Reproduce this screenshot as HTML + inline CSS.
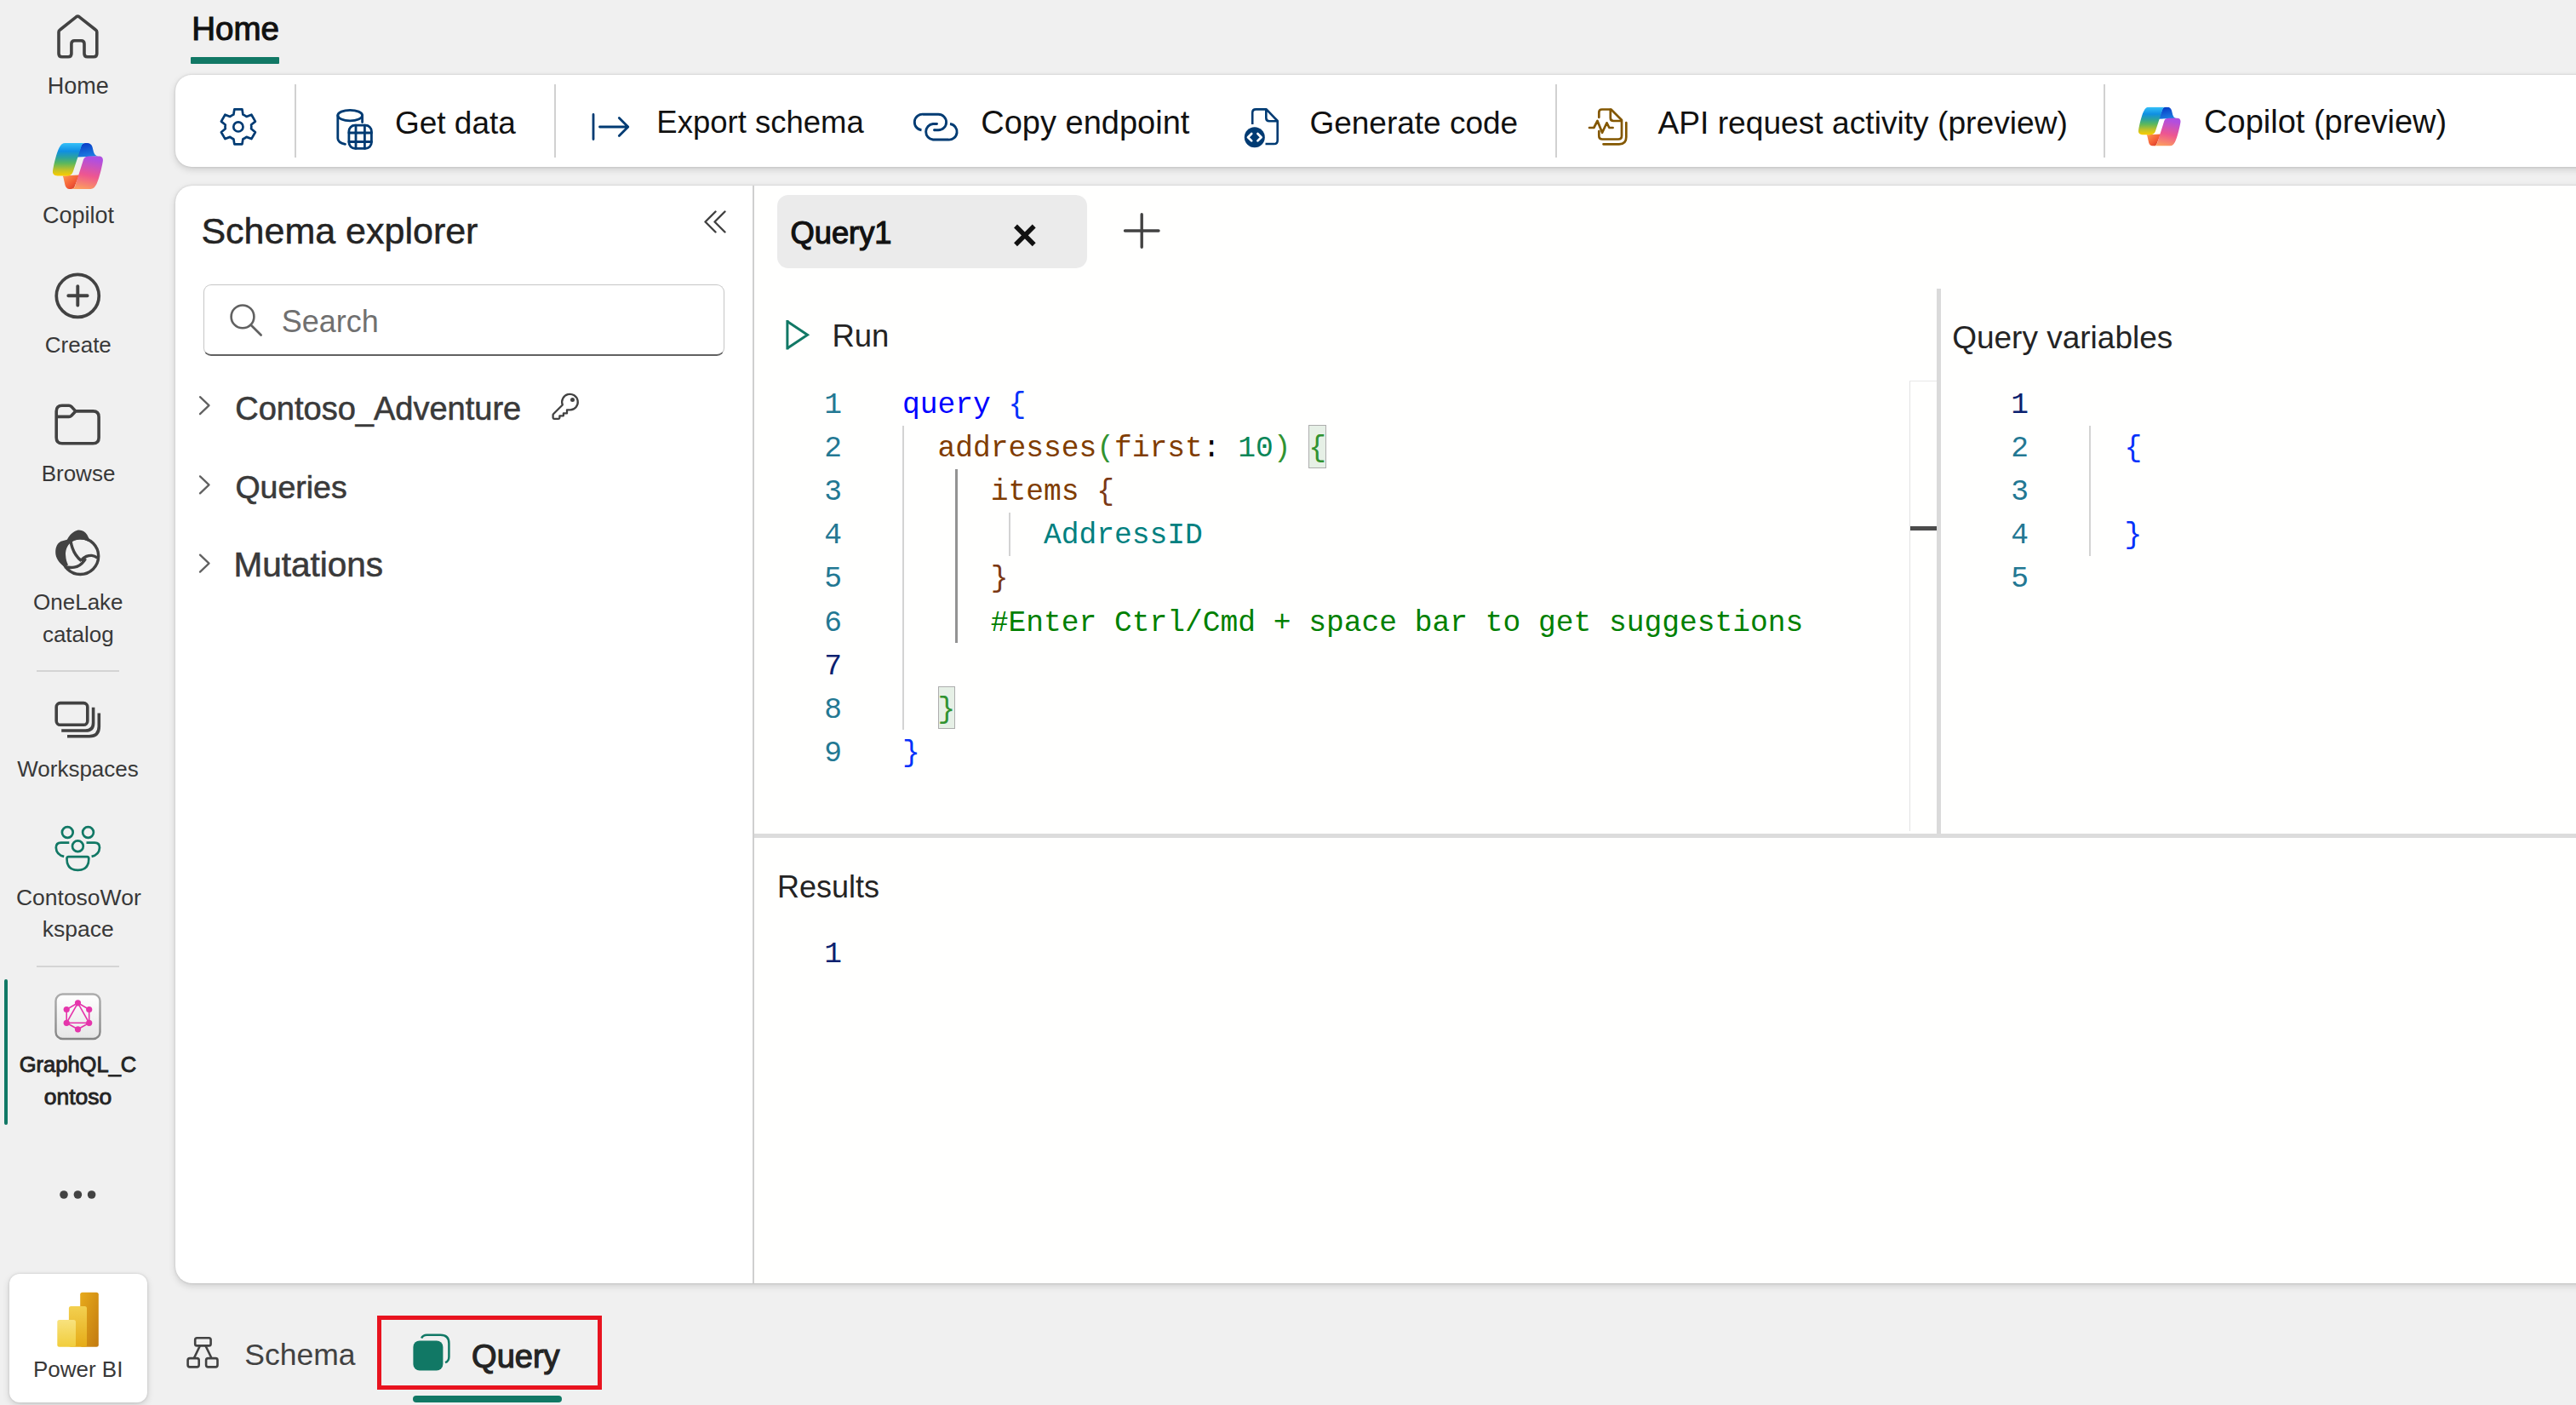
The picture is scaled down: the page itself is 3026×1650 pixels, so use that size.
<!DOCTYPE html>
<html><head><meta charset="utf-8"><style>
html,body{margin:0;padding:0;}
body{width:3026px;height:1650px;position:relative;overflow:hidden;background:#f0f0f0;font-family:'Liberation Sans', sans-serif;}
.r{position:absolute;}
.t{position:absolute;white-space:pre;line-height:1;}
svg.ic{position:absolute;left:0;top:0;}
</style></head><body>

<div class="r" style="left:206px;top:88px;width:3000px;height:108px;background:#fff;border-radius:19px;box-shadow:0 0 3px rgba(0,0,0,0.14),0 3px 8px rgba(0,0,0,0.15);"></div>
<div class="r" style="left:206px;top:218px;width:3000px;height:1289px;background:#fff;border-radius:20px;box-shadow:0 0 3px rgba(0,0,0,0.14),0 3px 8px rgba(0,0,0,0.15);"></div>
<div class="r" style="left:886px;top:218px;width:2140px;height:1289px;background:#fffffe;"></div>
<div class="r" style="left:11px;top:1496px;width:162px;height:151px;background:#fff;border-radius:12px;box-shadow:0 0 3px rgba(0,0,0,0.14),0 3px 8px rgba(0,0,0,0.15);"></div>
<div class="r" style="left:224px;top:67px;width:104px;height:8px;background:#117865;border-radius:1px;"></div>
<div class="r" style="left:345.5px;top:99px;width:2px;height:86px;background:#d1d1d1;"></div>
<div class="r" style="left:651px;top:99px;width:2px;height:86px;background:#d1d1d1;"></div>
<div class="r" style="left:1827px;top:99px;width:2px;height:86px;background:#d1d1d1;"></div>
<div class="r" style="left:2471px;top:99px;width:2px;height:86px;background:#d1d1d1;"></div>
<div class="r" style="left:43px;top:787px;width:97px;height:2px;background:#d4d4d4;"></div>
<div class="r" style="left:43px;top:1134px;width:97px;height:2px;background:#d4d4d4;"></div>
<div class="r" style="left:5px;top:1150px;width:4px;height:171px;background:#117865;border-radius:2px;"></div>
<div class="r" style="left:884px;top:218px;width:2px;height:1289px;background:#cfcfcf;"></div>
<div class="r" style="left:239px;top:334px;width:612px;height:84px;border:1.5px solid #c6c6c6;border-bottom:2.5px solid #616161;border-radius:9px;box-sizing:border-box;background:#fff;"></div>
<div class="r" style="left:913px;top:229px;width:364px;height:86px;background:#ebebeb;border-radius:13px;"></div>
<div class="r" style="left:886px;top:979px;width:2140px;height:5px;background:#dcdcdc;"></div>
<div class="r" style="left:2275px;top:339px;width:5px;height:640px;background:#dadada;"></div>
<div class="r" style="left:2243px;top:447px;width:32px;height:529px;border-left:1px solid #e3e3e3;border-top:1px solid #e8e8e8;box-sizing:border-box;"></div>
<div class="r" style="left:2244px;top:618px;width:31px;height:5px;background:#4b4b4b;"></div>
<div class="r" style="left:1537.25px;top:499.1px;width:20.75px;height:50.6px;background:#e6f0e6;border:1.5px solid #adadad;box-sizing:border-box;"></div>
<div class="r" style="left:1101.5px;top:805.7px;width:20.75px;height:50.6px;background:#e6f0e6;border:1.5px solid #adadad;box-sizing:border-box;"></div>
<div class="r" style="left:1060px;top:499.6px;width:2px;height:357.69999999999993px;background:#d3d3d3;"></div>
<div class="r" style="left:1122.25px;top:550.7px;width:3px;height:204.39999999999998px;background:#939393;"></div>
<div class="r" style="left:1184.5px;top:601.8px;width:2px;height:51.1px;background:#d3d3d3;"></div>
<div class="r" style="left:2454px;top:499.6px;width:2px;height:153.29999999999995px;background:#d3d3d3;"></div>
<div class="r" style="left:443px;top:1545px;width:264px;height:87px;border:5px solid #e8131f;box-sizing:border-box;"></div>
<div class="r" style="left:485px;top:1639px;width:175px;height:8px;background:#117865;border-radius:4px;"></div>
<svg class="ic" width="3026" height="1650" viewBox="0 0 3026 1650">
<path d="M69 63 V37.5 Q69 36 70.5 35 L89.5 19.8 Q91.3 18.5 93.1 19.8 L112.3 35 Q113.8 36 113.8 37.5 V63 Q113.8 66.8 110 66.8 H102.8 Q99 66.8 99 63 V51.5 Q99 47.8 95.3 47.8 H87.6 Q83.9 47.8 83.9 51.5 V63 Q83.9 66.8 80.1 66.8 H72.8 Q69 66.8 69 63 Z" fill="none" stroke="#424242" stroke-width="3.6" stroke-linejoin="round"/>
<defs>
<linearGradient id="cpL" x1="0" y1="0" x2="0" y2="1"><stop offset="0" stop-color="#34c0f8"/><stop offset="0.25" stop-color="#0f8fe3"/><stop offset="0.45" stop-color="#2ea39a"/><stop offset="0.62" stop-color="#5cb85c"/><stop offset="0.82" stop-color="#bfc12a"/><stop offset="1" stop-color="#fbcd00"/></linearGradient>
<linearGradient id="cpD" x1="0" y1="0" x2="0.3" y2="1"><stop offset="0" stop-color="#0535c4"/><stop offset="1" stop-color="#1b7be0"/></linearGradient>
<linearGradient id="cpR" x1="0.2" y1="0" x2="0" y2="1"><stop offset="0" stop-color="#b04fe0"/><stop offset="0.5" stop-color="#ee5690"/><stop offset="0.8" stop-color="#f7866e"/><stop offset="1" stop-color="#ffa85a"/></linearGradient>
<linearGradient id="cpO" x1="0" y1="0" x2="1" y2="1"><stop offset="0" stop-color="#ff9b50"/><stop offset="0.6" stop-color="#f35a35"/><stop offset="1" stop-color="#c83227"/></linearGradient>
<symbol id="copilot" viewBox="0 0 60 56">
<path d="M29 17 L34 3.5 C35 1.2 36.5 0.4 38.5 0.4 L41 0.4 C44 0.4 46 2 47 5 L48.5 11 C49.5 14 51 15.9 54 15.9 Z" fill="url(#cpD)"/>
<path d="M12 39 L31.5 38 L26 52 C25 54 24 54.4 22 54.4 L20 54.4 C17.5 54.4 16 53 15 50 L13.5 43.5 C13 41 12.5 39.5 12 39 Z" fill="url(#cpO)"/>
<path d="M15 0.4 L38.5 0.4 C36.5 0.4 35 1.5 34.3 3.5 L24.5 33.5 C23.5 37 21.5 38.9 18 38.9 L6 38.9 C2 38.9 0 36.5 0.5 33 C2 24 5 12 8 6 C10 2 12 0.4 15 0.4 Z" fill="url(#cpL)"/>
<path d="M43 15.9 L55 15.9 C58.5 15.9 60 18.5 59.3 22 C58 30 55 42 52 48.5 C50 52.5 48 54.4 45 54.4 L22 54.4 C24.5 54.4 25.8 53.5 26.5 51.5 L36.5 20 C37.5 17 39.5 15.9 43 15.9 Z" fill="url(#cpR)"/>
</symbol>
<linearGradient id="pb1" x1="0" y1="0" x2="0" y2="1"><stop offset="0" stop-color="#f8e27e"/><stop offset="1" stop-color="#f1cd3c"/></linearGradient>
<linearGradient id="pb2" x1="0" y1="0" x2="0" y2="1"><stop offset="0" stop-color="#f3d050"/><stop offset="1" stop-color="#e5ab17"/></linearGradient>
<linearGradient id="pb3" x1="0" y1="0" x2="1" y2="1"><stop offset="0" stop-color="#e8ab1c"/><stop offset="1" stop-color="#c27a10"/></linearGradient>
<linearGradient id="gqb" x1="0" y1="0" x2="0" y2="1"><stop offset="0" stop-color="#ffffff"/><stop offset="1" stop-color="#e6e6e6"/></linearGradient>
<linearGradient id="gqs" x1="0" y1="0" x2="0" y2="1"><stop offset="0" stop-color="#adadad"/><stop offset="1" stop-color="#858585"/></linearGradient>
</defs>
<use href="#copilot" x="61.5" y="167.5" width="60" height="56"/>
<use href="#copilot" x="2511.5" y="125.5" width="50.5" height="47"/>
<circle cx="91.25" cy="347.4" r="25" fill="none" stroke="#424242" stroke-width="3.7"/>
<path d="M80.3 347.3 H102.6 M91.3 336.1 V358.5" stroke="#424242" stroke-width="3.9" stroke-linecap="round"/>
<path d="M73 476.2 H81 Q82.6 476.2 83.8 477.4 L88.8 482.9 H109.3 Q116.1 482.9 116.1 489.7 V514 Q116.1 520.8 109.3 520.8 H73 Q66.2 520.8 66.2 514 V483 Q66.2 476.2 73 476.2 Z M66.2 489.4 H81 Q82.6 489.4 83.8 488.2 L88.8 482.9" fill="none" stroke="#424242" stroke-width="3.6" stroke-linejoin="round"/>
<circle cx="94.3" cy="653.1" r="21.4" fill="none" stroke="#424242" stroke-width="3.4"/>
<path d="M76 665.9 C69 661 65.2 655 65.2 648.5 C65.3 642 67.5 638 71.5 635.8 L78.8 633.8 C81 629.5 84 626 87.3 624.2 C89.5 623 91 622.4 93 622.4 C97 622.4 100.3 624.5 102.3 628 L105.1 633.4 L103.55 635.7 A19.7 19.7 0 0 0 83 637 C78.2 641.5 76.8 647 77.1 652 C77.4 657 78.5 660.5 80 663.3 Z" fill="#424242"/>
<path d="M82.9 634.5 C83.8 641 86 647 89 651.5 C90.8 654.3 92.8 656.5 95.6 658.6 M95.1 658.4 C97 656 99 654.5 101.5 653.4 C103.5 652.6 105.6 652.3 107.8 652.4 C110 652.6 112 653.4 114.5 655.2 M76 665.7 C80 666.6 84 666.8 87.3 666.2 C91.5 665.5 95.5 663 98.5 659 L100.5 656" fill="none" stroke="#424242" stroke-width="3.4" stroke-linecap="butt"/>
<rect x="66.2" y="825.6" width="36.6" height="25.7" rx="4.6" fill="none" stroke="#424242" stroke-width="3.6"/>
<path d="M72.2 858 H100.5 Q109.6 858 109.6 848.9 V830.8 M79 864.8 H104.8 Q116.3 864.8 116.3 853.3 V837.5" fill="none" stroke="#424242" stroke-width="3.6" stroke-linecap="butt"/>
<g fill="none" stroke="#117865" stroke-width="2.7"><circle cx="79.3" cy="977.5" r="6.4"/><circle cx="103.5" cy="977.5" r="6.4"/><circle cx="91.4" cy="993.7" r="6.4"/><path d="M81.3 989.6 H71.5 Q65.8 989.6 65.8 995.5 Q66.2 1003.8 75.2 1005.9"/><path d="M101.5 989.6 H111.3 Q117 989.6 117 995.5 Q116.6 1003.8 107.6 1005.9"/><path d="M80.5 1006.2 H102.3 Q104.3 1006.2 104.3 1008.5 Q104.3 1021.9 91.4 1021.9 Q78.5 1021.9 78.5 1008.5 Q78.5 1006.2 80.5 1006.2 Z"/></g>
<rect x="65.5" y="1167.5" width="52" height="52.5" rx="8" fill="url(#gqb)" stroke="url(#gqs)" stroke-width="2.4"/>
<polygon points="91.5,1177.8 104.7,1185.5 104.7,1201.3 91.5,1208.8 78.2,1201.3 78.2,1185.5" fill="none" stroke="#e535ab" stroke-width="1.6"/>
<polygon points="91.5,1177.8 104.7,1201.3 78.2,1201.3" fill="none" stroke="#e535ab" stroke-width="1.6"/>
<circle cx="91.5" cy="1177.8" r="3.6" fill="#e535ab"/>
<circle cx="104.7" cy="1185.5" r="3.6" fill="#e535ab"/>
<circle cx="104.7" cy="1201.3" r="3.6" fill="#e535ab"/>
<circle cx="91.5" cy="1208.8" r="3.6" fill="#e535ab"/>
<circle cx="78.2" cy="1201.3" r="3.6" fill="#e535ab"/>
<circle cx="78.2" cy="1185.5" r="3.6" fill="#e535ab"/>
<circle cx="75" cy="1403" r="4.8" fill="#424242"/>
<circle cx="91.4" cy="1403" r="4.8" fill="#424242"/>
<circle cx="107.6" cy="1403" r="4.8" fill="#424242"/>
<rect x="94.2" y="1517.7" width="21.6" height="64" rx="2.5" fill="url(#pb3)"/>
<rect x="80.9" y="1533.9" width="21.1" height="47.8" rx="2.5" fill="url(#pb2)"/>
<rect x="67.3" y="1549.9" width="21.7" height="31.8" rx="2.5" fill="url(#pb1)"/>
<path d="M275.35 128.40 L284.45 128.40 L285.42 134.52 A15.4 15.4 0 0 1 289.59 136.93 L295.38 134.71 L299.93 142.59 L295.11 146.49 A15.4 15.4 0 0 1 295.11 151.31 L299.93 155.21 L295.38 163.09 L289.59 160.87 A15.4 15.4 0 0 1 285.42 163.28 L284.45 169.40 L275.35 169.40 L274.38 163.28 A15.4 15.4 0 0 1 270.21 160.87 L264.42 163.09 L259.87 155.21 L264.69 151.31 A15.4 15.4 0 0 1 264.69 146.49 L259.87 142.59 L264.42 134.71 L270.21 136.93 A15.4 15.4 0 0 1 274.38 134.52 Z" fill="none" stroke="#003b73" stroke-width="2.7" stroke-linejoin="round"/>
<circle cx="279.9" cy="148.9" r="5.6" fill="none" stroke="#003b73" stroke-width="2.7"/>
<g fill="none" stroke="#003b73" stroke-width="2.8" stroke-linecap="round"><ellipse cx="411.2" cy="135.6" rx="14.4" ry="6.3"/><path d="M396.8 135.6 V162.5 Q396.8 167.5 405.5 169.3"/><path d="M425.6 135.6 V143.5"/><rect x="409.9" y="147.1" width="26.5" height="27.2" rx="7"/><path d="M418 147.1 V174.3 M428.4 147.1 V174.3 M409.9 156 H436.4 M409.9 166.5 H436.4"/></g>
<path d="M697 134.5 V163.5 M704.5 149 H737 M727.3 138.5 L737.8 149 L727.3 159.5" fill="none" stroke="#003b73" stroke-width="2.8" stroke-linecap="round" stroke-linejoin="round"/>
<path d="M1082.5 152.8 A9.3 9.3 0 0 1 1084.8 134.2 H1102.3 A9.3 9.3 0 0 1 1102.3 152.8 H1097.5 M1100.5 145.5 H1096 A9.3 9.3 0 0 0 1096 164 H1113.6 A9.3 9.3 0 0 0 1116 145.5" fill="none" stroke="#003b73" stroke-width="2.9" stroke-linecap="butt"/><circle cx="1097.5" cy="152.8" r="1.45" fill="#003b73"/><circle cx="1100.5" cy="145.5" r="1.45" fill="#003b73"/>
<path d="M1471.2 146 V132.5 Q1471.2 128.4 1475.3 128.4 H1487.6 L1500.7 142 V164.9 Q1500.7 169 1496.6 169 H1486.5 M1487.3 128.4 V138.5 Q1487.3 142.2 1491 142.2 H1500.7" fill="none" stroke="#003b73" stroke-width="2.6" stroke-linejoin="round"/>
<circle cx="1473.8" cy="161.2" r="12" fill="#003b73"/>
<path d="M1470.2 157 L1466 161.2 L1470.2 165.4 M1477.4 157 L1481.6 161.2 L1477.4 165.4" fill="none" stroke="#fff" stroke-width="2.7" stroke-linecap="round" stroke-linejoin="round"/>
<g fill="none" stroke="#835700" stroke-width="2.7" stroke-linecap="round" stroke-linejoin="round"><path d="M1878.3 137.8 V132 Q1878.3 128.5 1881.8 128.5 H1892.5 L1905 141 V159.5 Q1905 163.5 1901 163.5 H1882.3 Q1878.3 163.5 1878.3 159.5 V154.2"/><path d="M1891.8 128.8 V138.5 Q1891.8 142 1895.3 142 H1904.5"/><path d="M1910.3 144.2 V161 Q1910.3 169.3 1902 169.3 H1883.5"/><path d="M1867 150 H1872.3 L1876.5 142 L1882.1 155.8 L1887.5 144.3 L1890.4 150 H1894.6"/></g>
<path d="M840.5 248.5 L828.5 260.5 L840.5 272.5 M851.5 248.5 L839.5 260.5 L851.5 272.5" fill="none" stroke="#424242" stroke-width="2.4" stroke-linecap="round" stroke-linejoin="round"/>
<circle cx="285" cy="371.9" r="13.4" fill="none" stroke="#616161" stroke-width="2.6"/>
<path d="M294.8 381.7 L306.6 393.5" stroke="#616161" stroke-width="2.7" stroke-linecap="round"/>
<path d="M235 466.2 L245.5 476.2 L235 486.2" fill="none" stroke="#616161" stroke-width="2.3" stroke-linecap="round" stroke-linejoin="round"/>
<path d="M235 559.4 L245.5 569.4 L235 579.4" fill="none" stroke="#616161" stroke-width="2.3" stroke-linecap="round" stroke-linejoin="round"/>
<path d="M235 651.6 L245.5 661.6 L235 671.6" fill="none" stroke="#616161" stroke-width="2.3" stroke-linecap="round" stroke-linejoin="round"/>
<path d="M660.8 475.5 L650 486.3 Q649.6 486.7 649.6 487.3 V490.6 Q649.6 491.9 650.9 491.9 H656.1 Q657.4 491.9 657.4 490.6 V488.3 H661.9 V485.4 H666 V481.4 H670 A9.3 9.3 0 1 0 660.8 475.5 Z" fill="none" stroke="#424242" stroke-width="2.3" stroke-linejoin="round"/>
<circle cx="672.5" cy="469.4" r="2.5" fill="#424242"/>
<path d="M1193 265.5 L1214.7 287.2 M1214.7 265.5 L1193 287.2" stroke="#111" stroke-width="5.5" stroke-linecap="butt"/>
<path d="M1321.5 271 H1361 M1341.2 251.8 V290.2" stroke="#424242" stroke-width="3.4" stroke-linecap="round"/>
<path d="M924.9 377.5 L948.5 393.2 L924.9 409" fill="none" stroke="#117865" stroke-width="3" stroke-linejoin="miter"/><path d="M924.9 376 V410.5" stroke="#117865" stroke-width="3"/>
<g fill="none" stroke="#424242" stroke-width="2.6" stroke-linejoin="round"><rect x="229.2" y="1571.2" width="18.4" height="9.2" rx="2.2"/><rect x="220.6" y="1595.1" width="13.1" height="10.3" rx="2.4"/><rect x="242.1" y="1595.1" width="13.4" height="10.3" rx="2.4"/><path d="M234.9 1580.5 L228 1594.8 M241.5 1580.5 L248.4 1594.8"/></g>
<path d="M495.1 1571.6 Q496.8 1567.8 501.5 1567.8 H517.5 Q527.4 1567.8 527.4 1577.7 V1593.5 Q527.4 1598.6 523 1600.2" fill="none" stroke="#117865" stroke-width="2.5" stroke-linecap="butt"/>
<rect x="485.4" y="1574.4" width="35" height="35" rx="7.5" fill="#117865"/>
</svg>
<div class="t" style="left:-58.2px;width:300px;text-align:center;top:88.0px;font-size:27px;font-weight:normal;color:#383838;">Home</div>
<div class="t" style="left:-58.0px;width:300px;text-align:center;top:239.6px;font-size:27px;font-weight:normal;color:#383838;">Copilot</div>
<div class="t" style="left:-58.2px;width:300px;text-align:center;top:391.9px;font-size:26px;font-weight:normal;color:#383838;">Create</div>
<div class="t" style="left:-58.0px;width:300px;text-align:center;top:542.9px;font-size:26px;font-weight:normal;color:#383838;">Browse</div>
<div class="t" style="left:-58.2px;width:300px;text-align:center;top:693.9px;font-size:26px;font-weight:normal;color:#383838;">OneLake</div>
<div class="t" style="left:-58.2px;width:300px;text-align:center;top:731.7px;font-size:26px;font-weight:normal;color:#383838;">catalog</div>
<div class="t" style="left:-58.5px;width:300px;text-align:center;top:889.9px;font-size:26px;font-weight:normal;color:#383838;">Workspaces</div>
<div class="t" style="left:-57.7px;width:300px;text-align:center;top:1041.3px;font-size:26.5px;font-weight:normal;color:#383838;">ContosoWor</div>
<div class="t" style="left:-58.2px;width:300px;text-align:center;top:1078.0px;font-size:26.5px;font-weight:normal;color:#383838;">kspace</div>
<div class="t" style="left:-58.5px;width:300px;text-align:center;top:1238.0px;font-size:25.5px;font-weight:normal;color:#242424;-webkit-text-stroke:0.9px #242424;">GraphQL_C</div>
<div class="t" style="left:-58.5px;width:300px;text-align:center;top:1275.2px;font-size:26.5px;font-weight:normal;color:#242424;-webkit-text-stroke:0.9px #242424;">ontoso</div>
<div class="t" style="left:-58.3px;width:300px;text-align:center;top:1594.9px;font-size:26px;font-weight:normal;color:#383838;">Power BI</div>
<div class="t" style="left:225.3px;top:15.3px;font-family:'Liberation Sans', sans-serif;font-size:38.5px;font-weight:normal;color:#111;-webkit-text-stroke:1.1px #111;">Home</div>
<div class="t" style="left:463.9px;top:125.5px;font-family:'Liberation Sans', sans-serif;font-size:37px;font-weight:normal;color:#111;">Get data</div>
<div class="t" style="left:771.3px;top:126.3px;font-family:'Liberation Sans', sans-serif;font-size:36.5px;font-weight:normal;color:#111;">Export schema</div>
<div class="t" style="left:1152.3px;top:124.7px;font-family:'Liberation Sans', sans-serif;font-size:38px;font-weight:normal;color:#111;">Copy endpoint</div>
<div class="t" style="left:1538.4px;top:125.5px;font-family:'Liberation Sans', sans-serif;font-size:37px;font-weight:normal;color:#111;">Generate code</div>
<div class="t" style="left:1947.4px;top:125.8px;font-family:'Liberation Sans', sans-serif;font-size:37.2px;font-weight:normal;color:#111;">API request activity (preview)</div>
<div class="t" style="left:2589.1px;top:124.2px;font-family:'Liberation Sans', sans-serif;font-size:38px;font-weight:normal;color:#111;">Copilot (preview)</div>
<div class="t" style="left:236.4px;top:249.9px;font-family:'Liberation Sans', sans-serif;font-size:43px;font-weight:normal;color:#242424;-webkit-text-stroke:0.5px #242424;">Schema explorer</div>
<div class="t" style="left:330.7px;top:360.4px;font-family:'Liberation Sans', sans-serif;font-size:36px;font-weight:normal;color:#707070;">Search</div>
<div class="t" style="left:276.3px;top:460.7px;font-family:'Liberation Sans', sans-serif;font-size:38px;font-weight:normal;color:#3a3a3a;-webkit-text-stroke:0.6px #3a3a3a;">Contoso_Adventure</div>
<div class="t" style="left:276.4px;top:553.9px;font-family:'Liberation Sans', sans-serif;font-size:37.5px;font-weight:normal;color:#3a3a3a;-webkit-text-stroke:0.6px #3a3a3a;">Queries</div>
<div class="t" style="left:274.5px;top:642.6px;font-family:'Liberation Sans', sans-serif;font-size:40.5px;font-weight:normal;color:#3a3a3a;-webkit-text-stroke:0.6px #3a3a3a;">Mutations</div>
<div class="t" style="left:928.5px;top:255.9px;font-family:'Liberation Sans', sans-serif;font-size:36.3px;font-weight:normal;color:#111;-webkit-text-stroke:1.2px #111;">Query1</div>
<div class="t" style="left:977.4px;top:377.3px;font-family:'Liberation Sans', sans-serif;font-size:36.5px;font-weight:normal;color:#242424;">Run</div>
<div class="t" style="left:2293.2px;top:377.6px;font-family:'Liberation Sans', sans-serif;font-size:37px;font-weight:normal;color:#242424;">Query variables</div>
<div class="t" style="left:912.9px;top:1023.9px;font-family:'Liberation Sans', sans-serif;font-size:36px;font-weight:normal;color:#242424;">Results</div>
<div class="t" style="left:287.3px;top:1573.5px;font-family:'Liberation Sans', sans-serif;font-size:35.5px;font-weight:normal;color:#424242;">Schema</div>
<div class="t" style="left:554.1px;top:1574.1px;font-family:'Liberation Sans', sans-serif;font-size:38px;font-weight:normal;color:#242424;-webkit-text-stroke:1.2px #242424;">Query</div>
<div class="t" style="left:789.0px;width:200px;text-align:right;top:459.0px;font-family:'Liberation Mono', monospace;font-size:34.6px;color:#237893;">1</div>
<div class="t" style="left:789.0px;width:200px;text-align:right;top:510.1px;font-family:'Liberation Mono', monospace;font-size:34.6px;color:#237893;">2</div>
<div class="t" style="left:789.0px;width:200px;text-align:right;top:561.2px;font-family:'Liberation Mono', monospace;font-size:34.6px;color:#237893;">3</div>
<div class="t" style="left:789.0px;width:200px;text-align:right;top:612.3px;font-family:'Liberation Mono', monospace;font-size:34.6px;color:#237893;">4</div>
<div class="t" style="left:789.0px;width:200px;text-align:right;top:663.4px;font-family:'Liberation Mono', monospace;font-size:34.6px;color:#237893;">5</div>
<div class="t" style="left:789.0px;width:200px;text-align:right;top:714.5px;font-family:'Liberation Mono', monospace;font-size:34.6px;color:#237893;">6</div>
<div class="t" style="left:789.0px;width:200px;text-align:right;top:765.6px;font-family:'Liberation Mono', monospace;font-size:34.6px;color:#0b216f;">7</div>
<div class="t" style="left:789.0px;width:200px;text-align:right;top:816.7px;font-family:'Liberation Mono', monospace;font-size:34.6px;color:#237893;">8</div>
<div class="t" style="left:789.0px;width:200px;text-align:right;top:867.8px;font-family:'Liberation Mono', monospace;font-size:34.6px;color:#237893;">9</div>
<div class="t" style="left:1060.00px;top:459.0px;font-family:'Liberation Mono', monospace;font-size:34.6px;color:#0000ff;white-space:pre">query</div>
<div class="t" style="left:1184.50px;top:459.0px;font-family:'Liberation Mono', monospace;font-size:34.6px;color:#0431fa;white-space:pre">{</div>
<div class="t" style="left:1101.50px;top:510.1px;font-family:'Liberation Mono', monospace;font-size:34.6px;color:#803c00;white-space:pre">addresses</div>
<div class="t" style="left:1288.25px;top:510.1px;font-family:'Liberation Mono', monospace;font-size:34.6px;color:#319331;white-space:pre">(</div>
<div class="t" style="left:1309.00px;top:510.1px;font-family:'Liberation Mono', monospace;font-size:34.6px;color:#803c00;white-space:pre">first</div>
<div class="t" style="left:1412.75px;top:510.1px;font-family:'Liberation Mono', monospace;font-size:34.6px;color:#000;white-space:pre">:</div>
<div class="t" style="left:1454.25px;top:510.1px;font-family:'Liberation Mono', monospace;font-size:34.6px;color:#098658;white-space:pre">10</div>
<div class="t" style="left:1495.75px;top:510.1px;font-family:'Liberation Mono', monospace;font-size:34.6px;color:#319331;white-space:pre">)</div>
<div class="t" style="left:1537.25px;top:510.1px;font-family:'Liberation Mono', monospace;font-size:34.6px;color:#319331;white-space:pre">{</div>
<div class="t" style="left:1163.75px;top:561.2px;font-family:'Liberation Mono', monospace;font-size:34.6px;color:#803c00;white-space:pre">items</div>
<div class="t" style="left:1288.25px;top:561.2px;font-family:'Liberation Mono', monospace;font-size:34.6px;color:#7b3814;white-space:pre">{</div>
<div class="t" style="left:1226.00px;top:612.3px;font-family:'Liberation Mono', monospace;font-size:34.6px;color:#008080;white-space:pre">AddressID</div>
<div class="t" style="left:1163.75px;top:663.4px;font-family:'Liberation Mono', monospace;font-size:34.6px;color:#7b3814;white-space:pre">}</div>
<div class="t" style="left:1163.75px;top:714.5px;font-family:'Liberation Mono', monospace;font-size:34.6px;color:#008000;white-space:pre">#Enter Ctrl/Cmd + space bar to get suggestions</div>
<div class="t" style="left:1101.50px;top:816.7px;font-family:'Liberation Mono', monospace;font-size:34.6px;color:#319331;white-space:pre">}</div>
<div class="t" style="left:1060.00px;top:867.8px;font-family:'Liberation Mono', monospace;font-size:34.6px;color:#0431fa;white-space:pre">}</div>
<div class="t" style="left:2183.0px;width:200px;text-align:right;top:459.0px;font-family:'Liberation Mono', monospace;font-size:34.6px;color:#0b216f;">1</div>
<div class="t" style="left:2183.0px;width:200px;text-align:right;top:510.1px;font-family:'Liberation Mono', monospace;font-size:34.6px;color:#237893;">2</div>
<div class="t" style="left:2183.0px;width:200px;text-align:right;top:561.2px;font-family:'Liberation Mono', monospace;font-size:34.6px;color:#237893;">3</div>
<div class="t" style="left:2183.0px;width:200px;text-align:right;top:612.3px;font-family:'Liberation Mono', monospace;font-size:34.6px;color:#237893;">4</div>
<div class="t" style="left:2183.0px;width:200px;text-align:right;top:663.4px;font-family:'Liberation Mono', monospace;font-size:34.6px;color:#237893;">5</div>
<div class="t" style="left:2495.50px;top:510.1px;font-family:'Liberation Mono', monospace;font-size:34.6px;color:#0431fa;white-space:pre">{</div>
<div class="t" style="left:2495.50px;top:612.3px;font-family:'Liberation Mono', monospace;font-size:34.6px;color:#0431fa;white-space:pre">}</div>
<div class="t" style="left:789px;width:200px;text-align:right;top:1104.4px;font-family:'Liberation Mono', monospace;font-size:34.6px;color:#0b216f;">1</div>
</body></html>
